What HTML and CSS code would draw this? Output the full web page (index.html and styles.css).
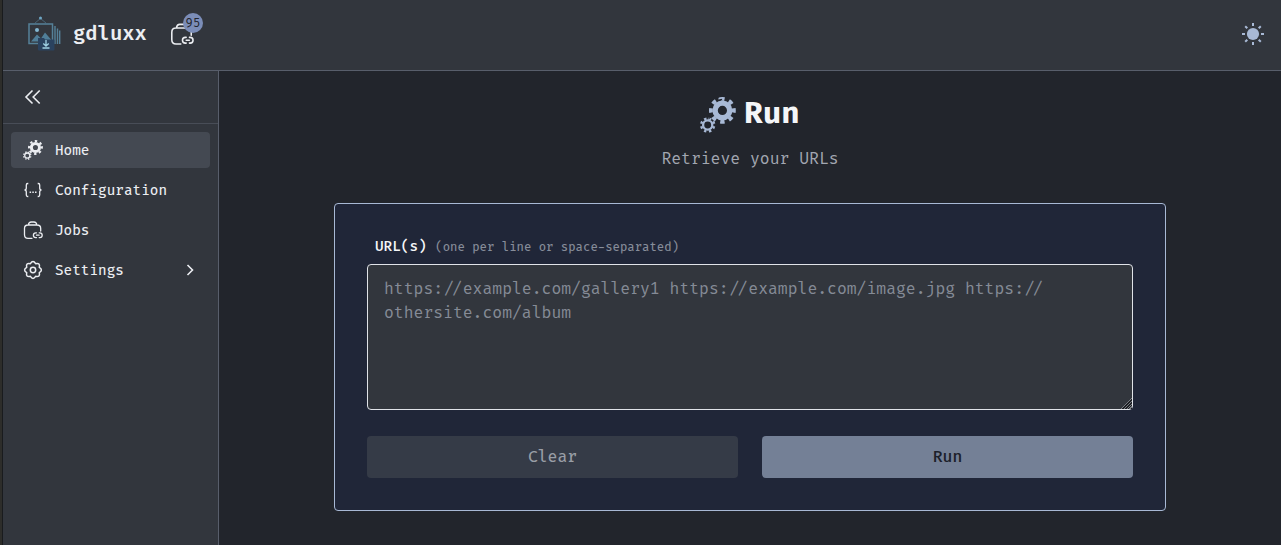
FILE: index.html
```html
<!DOCTYPE html>
<html lang="en">
<head>
<meta charset="utf-8">
<title>gdluxx</title>
<link rel="stylesheet" href="styles.css">
</head>
<body>
<svg class="defs" aria-hidden="true">
  <symbol id="gears" viewBox="0 0 36 36">
    <g fill="none" stroke="currentColor">
      <circle cx="22.4" cy="13.4" r="7.3" stroke-width="5.4"/>
      <circle cx="22.4" cy="13.4" r="11.5" stroke-width="3.8" pathLength="16" stroke-dasharray=".96 1.04" transform="rotate(-10.8 22.4 13.4)"/>
      <circle cx="7.7" cy="28" r="4.6" stroke-width="2.3"/>
      <circle cx="7.7" cy="28" r="6.5" stroke-width="2.4" pathLength="16" stroke-dasharray=".96 1.04" transform="rotate(12 7.7 28)"/>
    </g>
  </symbol>
  <symbol id="jobs" viewBox="0 0 20 20">
    <g fill="none" stroke="currentColor" stroke-width="1.3" stroke-linecap="round" stroke-linejoin="round">
      <path d="M9 18.3H5Q1.500 18.3 1.500 14.8V8.5Q1.500 5 5 5H14Q17.7 5 17.7 8.5V11M5.3 5Q5.800 2 8.2 2H11Q13.4 2 13.9 5"/>
      <path d="M13.5 12.8h-.7a2.4 2.4 0 0 0 0 4.8h.7M16.2 12.8h.6a2.4 2.4 0 0 1 0 4.8h-.6M13.5 15.2h2.6"/>
    </g>
  </symbol>
</svg>
<div class="app">
  <header class="topbar">
    <div class="brand">
      <svg class="logo" viewBox="0 0 34 36">
        <g fill="none" stroke="#558199">
          <path d="M8 7 13.500 2.500 19 7" stroke-width=".6"/>
          <path d="M2 8H25.500V27.500H2z" stroke-width="1.500"/>
          <path d="M28 10v18M30.500 12.500v15.500M32.700 14.500V28" stroke-width="1.400"/>
        </g>
        <circle cx="13.500" cy="2" r="1.500" fill="#6ea6c4"/>
        <circle cx="10" cy="14" r="2" fill="#83b8d3"/>
        <path d="M4 25.500 10 18.500l4 4 4-6 6 7v2z" fill="#507e98"/>
        <path d="M11 22h6l1 1.500h8.500q1 0 1 1v9q0 1-1 1H12q-1 0-1-1z" fill="#2a425f"/>
        <path d="M19 24v6m-2.700-2.500 2.700 2.700 2.700-2.700M15.500 32h7" fill="none" stroke="#a1d2e5" stroke-width="1.300"/>
      </svg>
      <span class="name">gdluxx</span>
    </div>
    <div class="jobs-link">
      <svg class="jobs-icon"><use href="#jobs"/></svg>
      <span class="badge">95</span>
    </div>
    <svg class="sun" viewBox="0 0 24 24">
      <circle cx="12" cy="12" r="6.100" fill="#a8b9d5"/>
      <path d="M12 1v3M12 20v3M1 12h3M20 12h3M4.200 4.200l2.100 2.100M17.700 17.700l2.100 2.100M4.200 19.800l2.100-2.100M17.700 6.300l2.100-2.100" stroke="#a8b9d5" stroke-width="2"/>
    </svg>
  </header>
  <div class="body">
    <aside class="sidebar">
      <div class="collapse">
        <svg class="chevrons" viewBox="0 0 20 20"><path d="M9.500 3.500 3 10 9.500 16.500M16.700 3.500 10.200 10l6.500 6.500"/></svg>
      </div>
      <nav class="nav">
        <a class="item active"><svg class="icon"><use href="#gears"/></svg><span>Home</span></a>
        <a class="item">
          <svg class="icon" viewBox="0 0 20 20">
            <path class="line" d="M5.300 3.500H4.700Q3.300 3.500 3.300 5V8Q3.300 10 1.500 10 3.300 10 3.300 12v3Q3.300 16.500 4.700 16.500h.6M14.700 3.500h.6Q16.700 3.500 16.700 5V8q0 2 1.800 2-1.800 0-1.800 2v3q0 1.500-1.400 1.500h-.6"/>
            <path d="M6.600 11.500h1.500V13H6.600zM9.300 11.500h1.500V13H9.300zM12 11.500h1.500V13H12z" fill="currentColor"/>
          </svg>
          <span>Configuration</span>
        </a>
        <a class="item"><svg class="icon"><use href="#jobs"/></svg><span>Jobs</span></a>
        <a class="item">
          <svg class="icon" viewBox="0 0 20 20">
            <path class="line cog" d="M7.400 3.700Q10-.5 12.600 3.700 17.400 2.600 16.300 7.400 20.500 10 16.300 12.600 17.400 17.400 12.600 16.300 10 20.500 7.400 16.300 2.600 17.400 3.700 12.600-.5 10 3.700 7.400 2.600 2.600 7.400 3.700z"/>
            <circle class="line cog" cx="10" cy="10" r="2.700"/>
          </svg>
          <span>Settings</span>
          <svg class="arrow" viewBox="0 0 16 16"><path d="M5.500 3 10.500 8l-5 5"/></svg>
        </a>
      </nav>
    </aside>
    <main class="main">
      <h1 class="title"><svg class="title-icon"><use href="#gears"/></svg><span>Run</span></h1>
      <p class="subtitle">Retrieve your URLs</p>
      <form class="card">
        <label class="label" for="urls">URL(s) <span class="hint">(one per line or space-separated)</span></label>
        <textarea class="urls" id="urls" placeholder="https://example.com/gallery1 https://example.com/image.jpg https://&#8203;othersite.com/album"></textarea>
        <div class="actions">
          <button class="btn clear" type="button">Clear</button>
          <button class="btn run" type="button">Run</button>
        </div>
      </form>
    </main>
  </div>
</div>
</body>
</html>
```
FILE: styles.css
```css
* { box-sizing: border-box; }
body {
  margin: 0;
  background: #22252c;
  color: #eceef2;
  font-family: "Fira Code", "DejaVu Sans Mono", monospace;
  font-size: 16px;
  overflow: hidden;
}
svg { display: block; flex: none; }
.defs { display: none; }
.app {
  height: 545px;
  display: flex;
  flex-direction: column;
  border-left: 2px solid #2d2d2a;
  box-shadow: inset 1px 0 #191b1e;
  padding-left: 1px;
}
.topbar {
  height: 71px;
  flex: none;
  display: flex;
  align-items: center;
  padding: 0 16px 2px 24px;
  background: #32363d;
  border-bottom: 1px solid #585e6b;
}
.brand { display: flex; align-items: center; gap: 12px; }
.logo { width: 34px; height: 36px; }
.name { font-size: 20px; font-weight: 600; line-height: 28px; width: 73px; }
.jobs-link { position: relative; margin-left: 24px; }
.jobs-icon { width: 24px; height: 24px; }
.badge {
  position: absolute;
  left: 13px;
  top: -9px;
  width: 20px;
  height: 20px;
  border-radius: 50%;
  background: #7b8db8;
  color: #22252c;
  font-size: 12px;
  line-height: 21px;
  text-align: center;
}
.sun { width: 24px; height: 24px; margin-left: auto; }
.body { flex: 1; display: flex; }
.sidebar { width: 216px; background: #32363d; border-right: 1px solid #585e6b; }
.collapse { height: 53px; padding: 16px 20px; border-bottom: 1px solid #484d57; }
.chevrons { width: 20px; height: 20px; }
.chevrons path, .arrow path { fill: none; stroke: #eceef2; stroke-width: 1.6; }
.nav { display: flex; flex-direction: column; gap: 4px; padding: 8px; }
.item {
  display: flex;
  align-items: center;
  gap: 12px;
  height: 36px;
  padding: 0 12px;
  border-radius: 4px;
  font-size: 14px;
  font-weight: 450;
  color: #eceef2;
}
.active { background: #444952; }
.icon { width: 20px; height: 20px; }
.line { fill: none; stroke: currentColor; stroke-width: 1.3; }
.cog { stroke-width: 1.5; stroke-linejoin: round; }
.arrow { width: 16px; height: 16px; margin-left: auto; }
.main { flex: 1; display: flex; flex-direction: column; align-items: center; padding-top: 24px; }
.title {
  display: flex;
  align-items: center;
  gap: 8px;
  margin: 0;
  height: 40px;
  font-size: 30px;
  line-height: 36px;
  color: #f5f6f8;
}
.title span { padding-bottom: 3px; }
.title-icon { width: 36px; height: 36px; color: #a8b9d5; }
.subtitle { margin: 12px 0 32px; line-height: 24px; color: #a2a7b1; }
.card {
  width: 832px;
  height: 308px;
  padding: 32px;
  display: flex;
  flex-direction: column;
  background: #202638;
  border: 1px solid #a8b9d5;
  border-radius: 4px;
}
.label {
  height: 20px;
  padding: 1px 8px 0;
  margin-bottom: 8px;
  font-size: 14px;
  font-weight: 500;
  line-height: 20px;
  white-space: pre;
  color: #f5f6f8;
}
.hint { font-size: 12px; font-weight: 450; color: #878d9a; }
.urls {
  width: 100%;
  height: 146px;
  flex: none;
  padding: 12px 16px;
  font: inherit;
  line-height: 24px;
  color: #eceef2;
  background: #32363d;
  border: 1px solid #e0e3e8;
  border-radius: 4px;
  resize: vertical;
}
.urls::placeholder { color: #858b96; }
.urls::-webkit-resizer {
  background: linear-gradient(135deg, #32363d 62%, transparent 62%), repeating-linear-gradient(135deg, #1d1f23 0 1px, #777b82 1px 2px);
}
.actions { display: flex; gap: 24px; margin-top: 26px; }
.btn {
  flex: 1;
  height: 42px;
  border: 0;
  border-radius: 4px;
  font: inherit;
  font-weight: 450;
}
.clear { background: #353b47; color: #999ea6; }
.run { background: #748096; color: #1c202a; font-weight: 500; }
```
